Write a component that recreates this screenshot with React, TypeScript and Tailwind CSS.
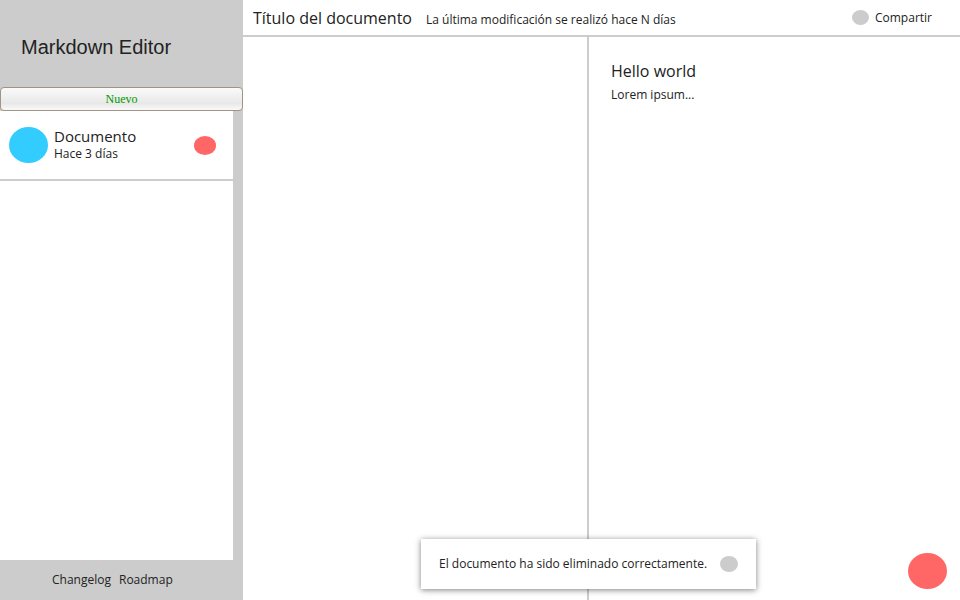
const hand = "font-['Comic_Sans_MS','Open_Sans',sans-serif]";

function DocumentRow() {
  return (
    <li className="flex h-[70px] items-center border-b-2 border-[#ccc] pr-[17px] pl-[9px]">
      <span className="h-9 w-[39px] shrink-0 rounded-[50%] bg-[#33ccff]" />
      <div className="ml-1.5 grow pb-0.5">
        <h2 className="text-[15px] leading-5">Documento</h2>
        <p className="text-xs leading-4">Hace 3 días</p>
      </div>
      <button type="button" aria-label="Eliminar documento" className="h-[19px] w-[22px] rounded-[50%] bg-[#ff6666]" />
    </li>
  );
}

function Sidebar() {
  return (
    <aside className="flex w-[243px] shrink-0 flex-col bg-[#ccc]">
      <h1 className="px-[21px] pt-[33px] pb-[26px] font-['Liberation_Sans',sans-serif] text-xl leading-7">
        Markdown Editor
      </h1>
      <button
        type="button"
        className="h-6 rounded-[4px] border border-[#a19484] bg-linear-to-b from-[#fafafa] from-0% via-[#e8e8e8] via-70% to-[#fafafa] font-['Liberation_Serif',serif] text-xs text-[#009900]"
      >
        Nuevo
      </button>
      <ul className="mr-2.5 grow bg-white">
        <DocumentRow />
      </ul>
      <nav className="flex h-10 items-center gap-2 pl-[52px] text-xs">
        <a href="#changelog">Changelog</a>
        <a href="#roadmap">Roadmap</a>
      </nav>
    </aside>
  );
}

function Toast() {
  return (
    <div
      role="status"
      className="absolute bottom-[11px] left-[421px] flex h-[50px] w-[335px] items-center justify-between bg-white px-[18px] text-xs shadow-[0_1px_6px_rgba(0,0,0,0.5)]"
    >
      <p>El documento ha sido eliminado correctamente.</p>
      <button type="button" aria-label="Cerrar" className="h-4 w-[18px] rounded-[50%] bg-[#ccc]" />
    </div>
  );
}

export default function App() {
  return (
    <div className={`relative flex min-h-screen bg-white text-[#222] ${hand}`}>
      <Sidebar />
      <main className="flex grow flex-col">
        <header className="flex h-[37px] items-center border-b-2 border-[#ccc] pr-7 pl-2.5">
          <h2 className="text-base">Título del documento</h2>
          <p className="ml-3.5 pt-1 text-xs">La última modificación se realizó hace N días</p>
          <button type="button" className="ml-auto flex items-center gap-1.5 text-xs">
            <span className="h-[15px] w-[17px] rounded-[50%] bg-[#ccc]" />
            Compartir
          </button>
        </header>
        <div className="grid grow grid-cols-[346fr_371fr]">
          <textarea
            aria-label="Contenido del documento"
            className="min-w-0 resize-none border-r-2 border-[#ccc] p-4 text-xs outline-none"
          />
          <article className="min-w-0 px-[22px] pt-[22px]">
            <h3 className="text-base leading-6">Hello world</h3>
            <p className="text-xs leading-6">Lorem ipsum...</p>
          </article>
        </div>
      </main>
      <Toast />
      <button
        type="button"
        aria-label="Eliminar"
        className="absolute right-[13px] bottom-[11px] h-9 w-[39px] rounded-[50%] bg-[#ff6666]"
      />
    </div>
  );
}
